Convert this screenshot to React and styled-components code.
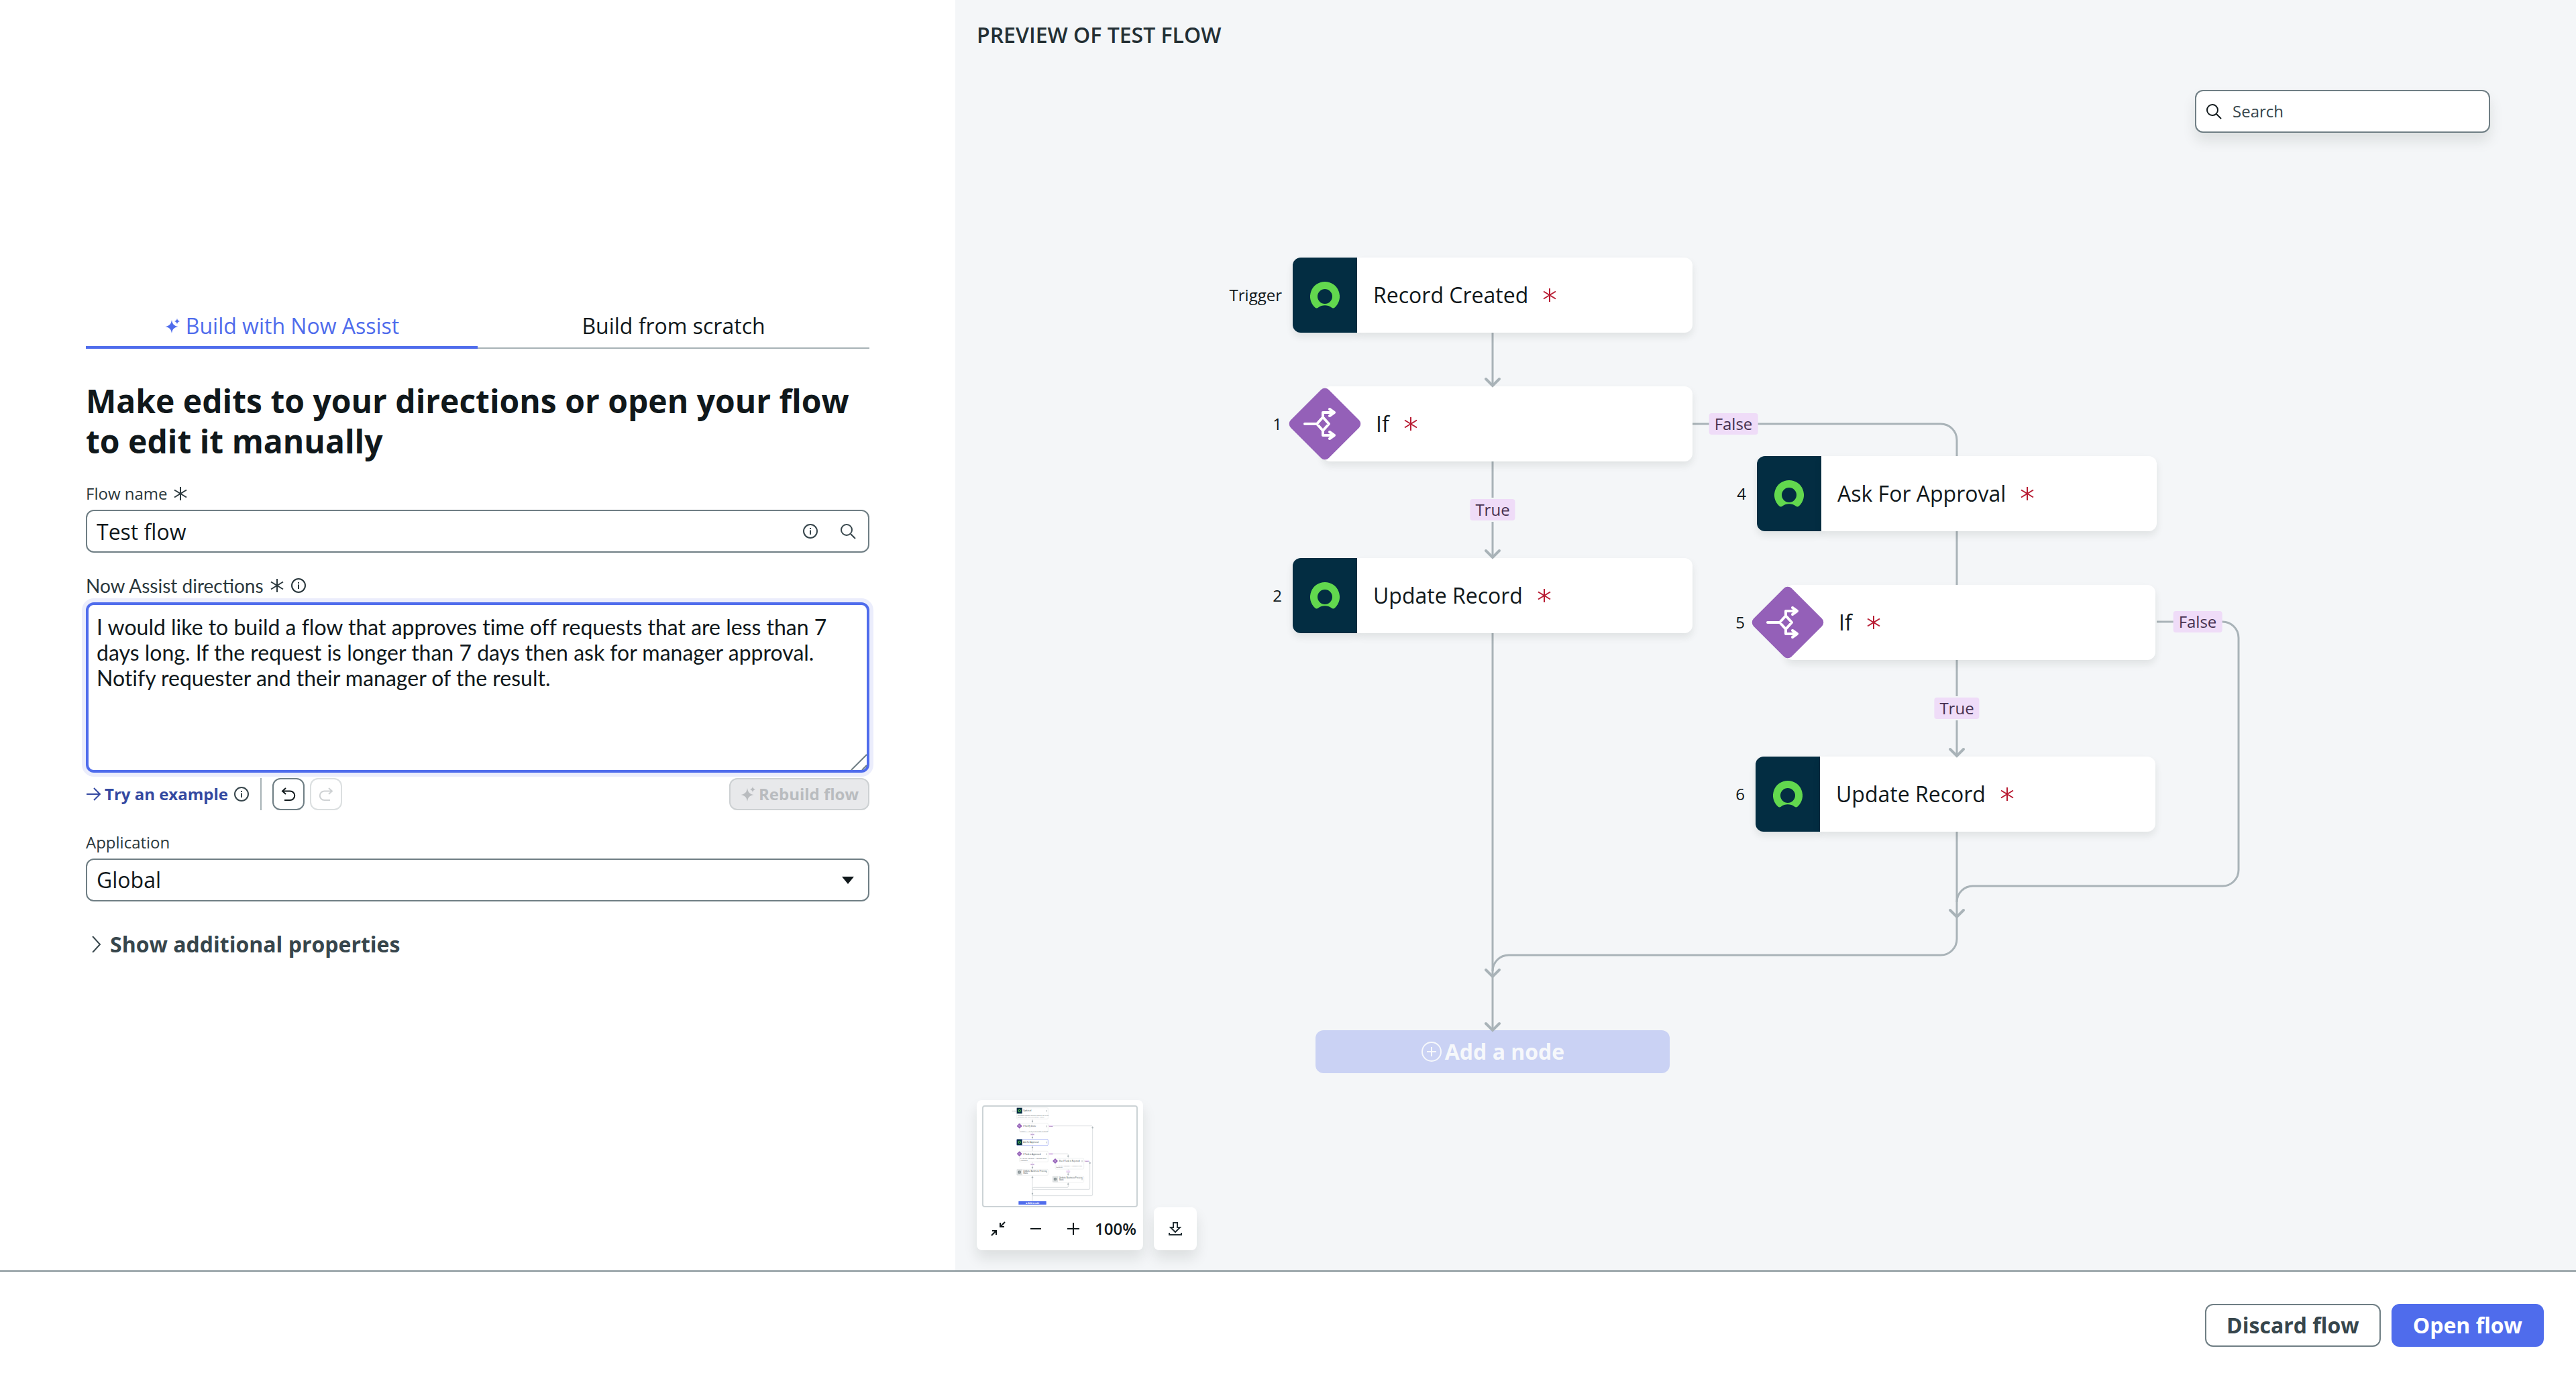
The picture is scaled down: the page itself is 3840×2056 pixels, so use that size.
import { useState } from 'react';
import styled, { createGlobalStyle } from 'styled-components';

const NODES = [
    { id: 'trigger', index: 'Trigger', title: 'Record Created', x: 503, y: 296 },
    { id: 'if-1', index: '1', title: 'If', x: 503, y: 488, decision: true },
    { id: 'update-2', index: '2', title: 'Update Record', x: 503, y: 744 },
    { id: 'ask-4', index: '4', title: 'Ask For Approval', x: 1195, y: 592 },
    { id: 'if-5', index: '5', title: 'If', x: 1193, y: 784, decision: true },
    { id: 'update-6', index: '6', title: 'Update Record', x: 1193, y: 1040 },
];

const BRANCHES = [
    { text: 'True', x: 801, y: 672 },
    { text: 'False', x: 1160, y: 544 },
    { text: 'True', x: 1493, y: 968 },
    { text: 'False', x: 1852, y: 839 },
];

const LINES = [
    'M801 408V487',
    'M801 600V654',
    'M801 690V743',
    'M801 856V1448',
    'M1099 544H1469A24 24 0 0 1 1493 568V592',
    'M1493 704V784',
    'M1493 896V950',
    'M1493 986V1039',
    'M1791 839H1889A24 24 0 0 1 1913 863V1209A24 24 0 0 1 1889 1233H1517A24 24 0 0 0 1493 1257',
    'M1493 1152V1312A24 24 0 0 1 1469 1336H825A24 24 0 0 0 801 1360',
];

const ARROWS = [[801, 487], [801, 743], [1493, 1039], [1493, 1279], [801, 1368], [801, 1448]];

function Sparkle(){
    return(
        <Icon viewBox='0 0 24 24' aria-hidden='true'>
            <path fill='currentColor' d='M11 3c1 6 3 8.500 9.500 10c-6.500 1.500-8.500 4-9.500 10c-1-6-3-8.500-9.500-10c6.500-1.500 8.500-4 9.500-10z' />
            <path fill='currentColor' d='M19 0.500c.4 2.500 1.200 3.600 4 4.500c-2.800.9-3.600 2-4 4.500c-.4-2.500-1.200-3.600-4-4.500c2.800-.9 3.600-2 4-4.500z' />
        </Icon>
    );
}

function Info(){
    return(
        <Icon viewBox='0 0 24 24' aria-hidden='true'>
            <circle cx='12' cy='12' r='10' />
            <path d='M12 10.500V17M12 7V9' />
        </Icon>
    );
}

function Magnifier(){
    return(
        <Icon viewBox='0 0 24 24' aria-hidden='true'>
            <circle cx='10' cy='10' r='8' />
            <path d='M16 16L23 23' />
        </Icon>
    );
}

function Required(){
    return(
        <Icon viewBox='0 0 24 24' aria-hidden='true'>
            <path d='M12 2V22M3 6.500L21 17.500M21 6.500L3 17.500' />
        </Icon>
    );
}

function Undo(){
    return(
        <Icon viewBox='0 0 24 24' aria-hidden='true'>
            <path d='M8 3L3 7.500L8 12M3 7.500H14.500A6.750 6.750 0 0 1 14.500 21H6' />
        </Icon>
    );
}

function RingLogo(){
    return(
        <svg width='44' height='40' viewBox='0 0 44 40' aria-hidden='true'>
            <path
                fill='#62d84e'
                fillRule='evenodd'
                d='M22 0A22 22 0 0 0 7.300 38.400Q9.600 40.300 12.100 38.500Q16.500 35.200 22 35.200T31.900 38.500Q34.400 40.300 36.700 38.400A22 22 0 0 0 22 0ZM22 11A11 11 0 1 1 22 33A11 11 0 1 1 22 11Z'
            />
        </svg>
    );
}

function DecisionShape(){
    return(
        <Diamond viewBox='-54 -54 108 108' aria-hidden='true'>
            <rect x='-40' y='-40' width='80' height='80' rx='8' transform='rotate(45)' fill='#9460b8' />
            <path
                fill='none'
                stroke='#ffffff'
                strokeWidth='4'
                strokeLinecap='round'
                strokeLinejoin='round'
                d='M-30 0H-12M-3 -10L6 0L-3 10L-12 0ZM-3 -10V-17H14M7 -22L14 -17L7 -12M-3 10V17H14M7 12L14 17L7 22'
            />
        </Diamond>
    );
}

function FlowNode({ node }){
    return(
        <Node $x={node.x} $y={node.y}>
            <NodeIndex>{node.index}</NodeIndex>
            {node.decision ? <DecisionShape /> : <NodeLogo><RingLogo /></NodeLogo>}
            <NodeBody $decision={node.decision}>
                {node.title}
                <Required />
            </NodeBody>
        </Node>
    );
}

function MiniCard({ x, y, w, h, title, titleEnd, note, noteEnd, kind, active }){
    return(
        <g>
            <rect x={x} y={y} width={w} height={h} rx='4' fill='#fff' stroke={active ? '#8c9cf2' : '#e9ebec'} strokeWidth='2' />
            {kind === 'now' && <>
                <rect x={x} y={y} width='24' height='26' fill='#032d42' />
                <circle cx={x + 12} cy={y + 13} r='5' fill='none' stroke='#62d84e' strokeWidth='3' />
            </>}
            {kind === 'if' && <>
                <rect x='-8.500' y='-8.500' width='17' height='17' rx='2' transform={`translate(${x} ${y + 12}) rotate(45)`} fill='#9460b8' />
                <path d={`M${x - 5} ${y + 12}h4l4-4m-4 4l4 4`} fill='none' stroke='#fff' strokeWidth='1.500' />
            </>}
            {kind === 'record' && <>
                <rect x={x} y={y} width='24' height={h} rx='2' fill='#dfe2e3' />
                <circle cx={x + 12} cy={y + 13} r='7' fill='#7b8789' />
                <path d={`M${x + 5} ${y + 13}h14M${x + 12} ${y + 6}v14`} stroke='#dfe2e3' />
            </>}
            <text x={x + (kind === 'if' ? 17 : 29)} y={y + (titleEnd ? 11 : 16)} fontSize='9' fill='#2b3539'>{title}</text>
            {titleEnd && <text x={x + 29} y={y + 20} fontSize='9' fill='#2b3539'>{titleEnd}</text>}
            {note && <text x={x + 4} y={y + 36} fontSize='7' fill='#49565b'>{note}</text>}
            {noteEnd && <text x={x + 4} y={y + 43} fontSize='7' fill='#49565b'>{noteEnd}</text>}
            <path d={`M${x + w - 8} ${y + 10}v7`} stroke='#4f5c60' strokeWidth='2' strokeDasharray='2 1' />
        </g>
    );
}

function MiniTag({ x, y, children }){
    return(
        <g>
            <rect x={x - 9} y={y - 4} width='18' height='8' rx='1' fill='#efdcf8' />
            <text x={x} y={y + 3} fontSize='7' textAnchor='middle' fill='#6d4a86'>{children}</text>
        </g>
    );
}

function MiniMap(){
    return(
        <MapFrame viewBox='138 150 684 444' role='img' aria-label='Flow overview'>
            <g fill='none' stroke='#c9cfd2' strokeWidth='2'>
                <path d='M357 205V224M357 264V295M357 324V350M357 396V430M357 457V574' />
                <path d='M427 236H622Q626 236 626 240V543Q626 548 622 548H357' />
                <path d='M427 361H513Q517 361 517 365V382M517 430V462M517 487V507Q517 511 513 511H362Q357 511 357 516' />
                <path d='M586 393H610Q614 393 614 397V516Q614 520 610 520H357' />
            </g>
            <g fill='#aab3b7'>
                {[[357, 215], [357, 288], [357, 332], [357, 422], [357, 466], [357, 539], [517, 371], [517, 452], [517, 496], [614, 402], [626, 244]].map(([x, y]) => (
                    <circle key={`${x}-${y}`} cx={x} cy={y} r='3.500' />
                ))}
            </g>
            <text x='266' y='171' fontSize='7' fill='#2b3539'>Trigger</text>
            <MiniCard kind='now' x={287} y={155} w={140} h={50} title='Updated' note='Business Process updated where the Cycle' noteEnd='changes, and the Cycle Stage: Award' />
            <MiniCard kind='if' x={299} y={224} w={128} h={40} title='If Verify Done' note='Trigger > … is the Cycle Stage is Deploy' />
            <MiniCard kind='now' x={287} y={296} w={140} h={27} title='Ask for Approval' active />
            <MiniCard kind='if' x={299} y={349} w={128} h={48} title='If Task is Approved' note='2. Ask for Approval > Approval State' noteEnd='Approved' />
            <MiniCard kind='record' x={287} y={430} w={140} h={27} title='Update Business Process' titleEnd='State' />
            <MiniCard kind='if' x={459} y={381} w={128} h={48} title='Else If Task is Rejected' note='2. Ask for Approval > Approval State' noteEnd='Rejected' />
            <MiniCard kind='record' x={447} y={461} w={140} h={27} title='Update Business Process' titleEnd='State' />
            <MiniTag x={440} y={236}>False</MiniTag>
            <MiniTag x={440} y={361}>False</MiniTag>
            <MiniTag x={600} y={393}>False</MiniTag>
            <MiniTag x={357} y={274}>True</MiniTag>
            <MiniTag x={357} y={408}>True</MiniTag>
            <MiniTag x={517} y={440}>True</MiniTag>
            <rect x='295' y='573' width='124' height='15' rx='1' fill='#4f6cec' />
            <text x='357' y='584' fontSize='9' fontWeight='700' textAnchor='middle' fill='#fff'>⊕ Add a node</text>
        </MapFrame>
    );
}

function BuildForm(){
    const [name, setName] = useState('Test flow');
    const [directions, setDirections] = useState('I would like to build a flow that approves time off requests that are less than 7 days long. If the request is longer than 7 days then ask for manager approval. Notify requester and their manager of the result.');

    return(
        <Form onSubmit={(e) => e.preventDefault()}>
            <Tabs role='tablist'>
                <Tab type='button' role='tab' aria-selected='true' $active>
                    <Sparkle />
                    Build with Now Assist
                </Tab>
                <Tab type='button' role='tab' aria-selected='false'>Build from scratch</Tab>
            </Tabs>
            <Heading>Make edits to your directions or open your flow to edit it manually</Heading>
            <Label htmlFor='flow-name'>Flow name <Required /></Label>
            <Field>
                <FieldInput id='flow-name' value={name} onChange={(e) => setName(e.target.value)} />
                <Info />
                <Magnifier />
            </Field>
            <Label htmlFor='directions' $spaced $large>Now Assist directions <Required /><Info /></Label>
            <Directions>
                <textarea id='directions' value={directions} onChange={(e) => setDirections(e.target.value)} />
                <Grip viewBox='0 0 24 24' aria-hidden='true'>
                    <path d='M1 24L24 1M17 24L24 17' />
                </Grip>
            </Directions>
            <Actions>
                <ExampleLink href='#example'>
                    <Icon viewBox='0 0 24 24' aria-hidden='true'>
                        <path d='M1 12H21M12 3L21 12L12 21' />
                    </Icon>
                    Try an example
                </ExampleLink>
                <Info />
                <Divider />
                <SquareButton type='button' aria-label='Undo'><Undo /></SquareButton>
                <SquareButton type='button' aria-label='Redo' $flip disabled><Undo /></SquareButton>
                <RebuildButton type='button' disabled><Sparkle />Rebuild flow</RebuildButton>
            </Actions>
            <Label htmlFor='application' $spaced>Application</Label>
            <Field>
                <FieldSelect id='application' defaultValue='Global'>
                    <option>Global</option>
                </FieldSelect>
                <Caret viewBox='0 0 24 24' aria-hidden='true'>
                    <path d='M3 7H21L12 18Z' />
                </Caret>
            </Field>
            <Disclosure type='button' aria-expanded='false'>
                <Icon viewBox='0 0 24 24' aria-hidden='true'>
                    <path d='M6 0L17 12L6 24' />
                </Icon>
                Show additional properties
            </Disclosure>
        </Form>
    );
}

function Preview(){
    return(
        <PreviewPanel>
            <PreviewTitle>PREVIEW OF TEST FLOW</PreviewTitle>
            <Canvas>
                <Wires aria-hidden='true'>
                    {LINES.map((d) => <path key={d} d={d} />)}
                </Wires>
                {NODES.map((node) => <FlowNode key={node.id} node={node} />)}
                {BRANCHES.map((b) => <Branch key={`${b.x}-${b.y}`} $x={b.x} $y={b.y}>{b.text}</Branch>)}
                <AddNode type='button' disabled>
                    <Icon viewBox='0 0 32 32' aria-hidden='true'>
                        <circle cx='16' cy='16' r='14' />
                        <path d='M16 9V23M9 16H23' />
                    </Icon>
                    Add a node
                </AddNode>
                <Wires aria-hidden='true' $heads>
                    {ARROWS.map(([x, y]) => <path key={`${x}-${y}`} d={`M${x - 10} ${y - 10}L${x} ${y}L${x + 10} ${y - 10}`} />)}
                </Wires>
                <SearchBox>
                    <Magnifier />
                    <input type='search' placeholder='Search' aria-label='Search' />
                </SearchBox>
                <MapTools>
                    <MapPanel>
                        <MiniMap />
                        <ZoomRow>
                            <ZoomButton type='button' aria-label='Fit to screen'>
                                <Icon viewBox='0 0 24 24' aria-hidden='true'>
                                    <path d='M22 2L15 9M15 3V9H21M2 22L9 15M3 15H9V21' />
                                </Icon>
                            </ZoomButton>
                            <ZoomButton type='button' aria-label='Zoom out'>
                                <Icon viewBox='0 0 24 24' aria-hidden='true'><path d='M4 12H20' /></Icon>
                            </ZoomButton>
                            <ZoomButton type='button' aria-label='Zoom in'>
                                <Icon viewBox='0 0 24 24' aria-hidden='true'><path d='M3 12H21M12 3V21' /></Icon>
                            </ZoomButton>
                            <span>100%</span>
                        </ZoomRow>
                    </MapPanel>
                    <Download type='button' aria-label='Download'>
                        <Icon viewBox='0 0 24 24' aria-hidden='true'>
                            <path d='M9 3H15V10H19L12 17L5 10H9ZM3 18V21H21V18' />
                        </Icon>
                    </Download>
                </MapTools>
            </Canvas>
        </PreviewPanel>
    );
}

export default function App(){
    return(
        <Page>
            <GlobalStyle />
            <Main>
                <BuildForm />
                <Preview />
            </Main>
            <Footer>
                <FooterButton type='button'>Discard flow</FooterButton>
                <FooterButton type='button' $primary>Open flow</FooterButton>
            </Footer>
        </Page>
    );
}

const GlobalStyle = createGlobalStyle`
    *{
        box-sizing: border-box;
    }
    body{
        margin: 0;
        background: #ffffff;
        color: #10181b;
        font-family: 'Open Sans', 'Noto Sans', sans-serif;
        font-size: 32px;
        line-height: 44px;
    }
    button, input, select, textarea{
        font: inherit;
        color: inherit;
    }
    button{
        cursor: pointer;
    }
`

const Page = styled.div`
    display: flex;
    flex-direction: column;
    min-height: 100vh;
`

const Main = styled.main`
    flex: 1;
    display: grid;
    grid-template-columns: 89fr 151fr;
`

const Icon = styled.svg`
    flex: none;
    width: 24px;
    height: 24px;
    fill: none;
    stroke: currentColor;
    stroke-width: 2;
    path[fill]{
        stroke: none;
    }
`

const Form = styled.form`
    display: flex;
    flex-direction: column;
    justify-content: center;
    padding: 0 128px;
`

const Tabs = styled.div`
    display: grid;
    grid-template-columns: 1fr 1fr;
`

const Tab = styled.button`
    display: flex;
    align-items: center;
    justify-content: center;
    gap: 8px;
    height: 64px;
    padding: 0 0 4px;
    border: 0;
    background: none;
    color: ${props => props.$active ? '#4f6cec' : '#10181b'};
    box-shadow: inset 0 ${props => props.$active ? '-4px 0 #4f6cec' : '-2px 0 #a7b2b6'};
`

const Heading = styled.h1`
    margin: 48px 0 32px;
    font-size: 48px;
    line-height: 60px;
    font-weight: 700;
`

const Label = styled.label`
    display: flex;
    align-items: center;
    gap: 8px;
    margin: ${props => props.$spaced ? '32px' : '0'} 0 8px;
    color: #2b383d;
    font-family: ${props => props.$large ? 'Lato, sans-serif' : 'inherit'};
    font-size: ${props => props.$large ? '28px' : '24px'};
    line-height: ${props => props.$large ? '34px' : '32px'};
`

const Field = styled.div`
    position: relative;
    display: flex;
    align-items: center;
    gap: 32px;
    height: 64px;
    padding-right: 18px;
    border: 2px solid #6f7e84;
    border-radius: 12px;
    color: #37464c;
`

const FieldInput = styled.input`
    flex: 1;
    min-width: 0;
    height: 100%;
    padding: 0 0 0 14px;
    border: 0;
    outline: 0;
    background: none;
    color: #10181b;
`

const FieldSelect = styled.select`
    appearance: none;
    flex: 1;
    height: 100%;
    padding: 0 0 0 14px;
    border: 0;
    outline: 0;
    background: none;
    color: #10181b;
`

const Caret = styled.svg`
    width: 24px;
    height: 24px;
    fill: #10181b;
    pointer-events: none;
`

const Directions = styled.div`
    position: relative;
    display: flex;
    textarea{
        flex: 1;
        height: 254px;
        padding: 14px 12px;
        border: 4px solid #4f6cec;
        border-radius: 12px;
        outline: 0;
        box-shadow: 0 0 0 6px #ebedfc;
        resize: none;
        font-family: Lato, sans-serif;
        font-variant-ligatures: none;
        line-height: 38px;
    }
`

const Grip = styled.svg`
    position: absolute;
    right: 4px;
    bottom: 4px;
    width: 24px;
    height: 24px;
    stroke: #6f7e84;
    stroke-width: 2;
    pointer-events: none;
`

const Actions = styled.div`
    display: flex;
    align-items: center;
    gap: 8px;
    margin-top: 8px;
    color: #37464c;
    font-size: 24px;
    line-height: 32px;
`

const ExampleLink = styled.a`
    display: flex;
    align-items: center;
    gap: 4px;
    color: #3449a1;
    font-weight: 700;
    text-decoration: none;
`

const Divider = styled.span`
    width: 2px;
    height: 48px;
    margin: 0 8px;
    background: #a7b2b6;
`

const SquareButton = styled.button`
    display: flex;
    align-items: center;
    justify-content: center;
    width: 48px;
    height: 48px;
    padding: 0;
    border: 2px solid #6f7e84;
    border-radius: 12px;
    background: #ffffff;
    color: #10181b;
    &:disabled{
        border-color: #dbdfe0;
        color: #cfd2d4;
    }
    svg{
        transform: ${props => props.$flip ? 'scaleX(-1)' : 'none'};
    }
`

const RebuildButton = styled.button`
    display: flex;
    align-items: center;
    gap: 4px;
    height: 48px;
    margin-left: auto;
    padding: 0 14px;
    border: 2px solid #cdd1d3;
    border-radius: 12px;
    background: #e8e9eb;
    color: #b9bcbf;
    font-weight: 700;
`

const Disclosure = styled.button`
    display: flex;
    align-items: center;
    gap: 8px;
    margin-top: 32px;
    padding: 10px 0 8px 4px;
    border: 0;
    background: none;
    color: #37464c;
    font-weight: 700;
`

const PreviewPanel = styled.section`
    display: flex;
    flex-direction: column;
    min-width: 0;
    background: #f4f6f8;
`

const PreviewTitle = styled.h2`
    margin: 0;
    padding: 30px 32px 14px;
    color: #232f34;
    font-size: 32px;
    font-weight: 600;
`

const Canvas = styled.div`
    position: relative;
    flex: 1;
    min-height: 1800px;
    overflow: hidden;
`

const Wires = styled.svg`
    position: absolute;
    inset: 0;
    width: 100%;
    height: 100%;
    fill: none;
    stroke: #a9b3b8;
    stroke-width: ${props => props.$heads ? 4 : 3};
    stroke-linecap: ${props => props.$heads ? 'round' : 'butt'};
    pointer-events: none;
`

const Node = styled.article`
    position: absolute;
    left: ${props => props.$x}px;
    top: ${props => props.$y}px;
    display: flex;
    width: 596px;
    height: 112px;
`

const NodeIndex = styled.span`
    position: absolute;
    right: calc(100% + 16px);
    top: 40px;
    font-size: 24px;
    line-height: 32px;
`

const NodeLogo = styled.span`
    display: flex;
    align-items: center;
    justify-content: center;
    width: 96px;
    border-radius: 12px 0 0 12px;
    background: #032d42;
    box-shadow: 0 6px 12px rgba(20, 30, 24, 0.09);
`

const Diamond = styled.svg`
    position: absolute;
    left: -6px;
    top: 2px;
    width: 108px;
    height: 108px;
`

const NodeBody = styled.div`
    flex: 1;
    display: flex;
    align-items: center;
    gap: 20px;
    margin-left: ${props => props.$decision ? '44px' : '0'};
    padding-left: ${props => props.$decision ? '80px' : '24px'};
    border-radius: ${props => props.$decision ? '12px' : '0 12px 12px 0'};
    background: #ffffff;
    box-shadow: 0 6px 12px rgba(20, 30, 24, 0.09);
    svg{
        color: #b81b32;
    }
`

const Branch = styled.span`
    position: absolute;
    left: ${props => props.$x}px;
    top: ${props => props.$y}px;
    transform: translate(-50%, -50%);
    padding: 0 8px;
    border-radius: 4px;
    background: #efdcf8;
    color: #45304f;
    font-size: 24px;
    line-height: 32px;
`

const AddNode = styled.button`
    position: absolute;
    left: 537px;
    top: 1448px;
    display: flex;
    align-items: center;
    justify-content: center;
    gap: 4px;
    width: 528px;
    height: 64px;
    border: 0;
    border-radius: 12px;
    background: #cad2f4;
    color: #f6f8fb;
    font-weight: 700;
    svg{
        width: 32px;
        height: 32px;
    }
`

const SearchBox = styled.label`
    position: absolute;
    right: 128px;
    top: 46px;
    display: flex;
    align-items: center;
    gap: 16px;
    width: 440px;
    height: 64px;
    padding: 0 14px;
    border: 2px solid #6f7e84;
    border-radius: 12px;
    background: #ffffff;
    box-shadow: 0 12px 20px rgba(20, 30, 24, 0.1);
    font-size: 24px;
    input{
        flex: 1;
        min-width: 0;
        padding: 0;
        border: 0;
        outline: 0;
        background: none;
    }
    input::placeholder{
        color: #37464c;
        opacity: 1;
    }
`

const MapTools = styled.div`
    position: absolute;
    left: 32px;
    bottom: 30px;
    display: flex;
    align-items: flex-end;
    gap: 16px;
    color: #232f34;
`

const MapPanel = styled.div`
    width: 248px;
    padding: 8px 8px 0;
    border-radius: 8px;
    background: #ffffff;
    box-shadow: 0 12px 20px rgba(20, 30, 24, 0.1);
`

const MapFrame = styled.svg`
    display: block;
    width: 232px;
    height: 152px;
    border: 2px solid #ccd3d6;
    border-radius: 4px;
`

const ZoomRow = styled.div`
    display: flex;
    align-items: center;
    gap: 8px;
    height: 64px;
    font-size: 24px;
    font-weight: 600;
    color: #10181b;
`

const ZoomButton = styled.button`
    display: flex;
    align-items: center;
    justify-content: center;
    flex: none;
    width: 48px;
    height: 48px;
    padding: 0;
    border: 0;
    background: none;
`

const Download = styled(ZoomButton)`
    width: 64px;
    height: 64px;
    border-radius: 8px;
    background: #ffffff;
    box-shadow: 0 12px 20px rgba(20, 30, 24, 0.1);
`

const Footer = styled.footer`
    display: flex;
    justify-content: flex-end;
    gap: 16px;
    padding: 48px;
    border-top: 2px solid #849297;
`

const FooterButton = styled.button`
    height: 64px;
    padding: 0 30px;
    border: 2px solid ${props => props.$primary ? '#4f6cec' : '#6f7e84'};
    border-radius: 12px;
    background: ${props => props.$primary ? '#4f6cec' : '#ffffff'};
    color: ${props => props.$primary ? '#ffffff' : '#37464c'};
    font-weight: 700;
`
